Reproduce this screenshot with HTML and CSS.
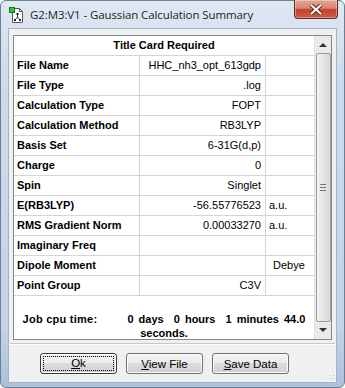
FILE: index.html
```html
<!DOCTYPE html>
<html lang="en">

<head>
    <meta charset="UTF-8">
    <title>G2:M3:V1 - Gaussian Calculation Summary</title>
    <link rel="stylesheet" href="styles.css">
</head>

<body>
    <div class="window">
        <!-- Title bar -->
        <div class="titlebar">
            <svg class="app-icon" width="16" height="16" viewBox="0 0 16 16">
                <path d="M3.5 1.5 H10.5 L13.5 4.5 V15.5 H3.5 Z" fill="#fff" stroke="#555" />
                <path d="M10.5 1.5 V4.5 H13.5" fill="none" stroke="#555" />
                <line x1="8.5" y1="7" x2="8.5" y2="10" stroke="#333" />
                <line x1="8.5" y1="10" x2="6" y2="13" stroke="#333" />
                <line x1="8.5" y1="10" x2="11" y2="13" stroke="#333" />
                <rect x="7.5" y="6" width="2" height="2" fill="#222" />
                <rect x="5" y="12" width="2" height="2" fill="#222" />
                <rect x="10" y="12" width="2" height="2" fill="#222" />
                <rect x="0.5" y="0.5" width="5" height="5" fill="#2fc22f" stroke="#137a13" />
            </svg>
            <span class="title-text">G2:M3:V1 - Gaussian Calculation Summary</span>
            <div class="close-btn">
                <svg width="14" height="11" viewBox="0 0 14 11">
                    <path d="M2 1 L12 10 M12 1 L2 10" stroke="#5a2018" stroke-width="4" />
                    <path d="M2 1 L12 10 M12 1 L2 10" stroke="#fff" stroke-width="2.2" />
                </svg>
            </div>
        </div>

        <!-- Client area -->
        <div class="client">
            <div class="listbox">
                <div class="sheet">
                    <div class="head">Title Card Required</div>

                    <div class="row"><div class="lbl">File Name</div><div class="val">HHC_nh3_opt_613gdp</div><div class="unit"></div></div>
                    <div class="row"><div class="lbl">File Type</div><div class="val">.log</div><div class="unit"></div></div>
                    <div class="row"><div class="lbl">Calculation Type</div><div class="val">FOPT</div><div class="unit"></div></div>
                    <div class="row"><div class="lbl">Calculation Method</div><div class="val">RB3LYP</div><div class="unit"></div></div>
                    <div class="row"><div class="lbl">Basis Set</div><div class="val">6-31G(d,p)</div><div class="unit"></div></div>
                    <div class="row"><div class="lbl">Charge</div><div class="val">0</div><div class="unit"></div></div>
                    <div class="row"><div class="lbl">Spin</div><div class="val">Singlet</div><div class="unit"></div></div>
                    <div class="row"><div class="lbl">E(RB3LYP)</div><div class="val">-56.55776523</div><div class="unit">a.u.</div></div>
                    <div class="row"><div class="lbl">RMS Gradient Norm</div><div class="val">0.00033270</div><div class="unit">a.u.</div></div>
                    <div class="row"><div class="lbl">Imaginary Freq</div><div class="val"></div><div class="unit"></div></div>
                    <div class="row"><div class="lbl">Dipole Moment</div><div class="val"></div><div class="unit debye">Debye</div></div>
                    <div class="row"><div class="lbl">Point Group</div><div class="val">C3V</div><div class="unit"></div></div>

                    <div class="job">
                        <span class="job-label">Job cpu time:</span><span class="job-time">0 days&nbsp;&nbsp;0 hours&nbsp;&nbsp;1 minutes 44.0</span><br>seconds.
                    </div>
                </div>

                <!-- Vertical scrollbar -->
                <div class="scrollbar">
                    <div class="arrow up"></div>
                    <div class="thumb"><span class="grip"></span></div>
                    <div class="arrow down"></div>
                </div>
            </div>

            <div class="separator"></div>

            <div class="buttons">
                <button class="btn default"><span class="focus"><u>O</u>k</span></button>
                <button class="btn"><u>V</u>iew File</button>
                <button class="btn"><u>S</u>ave Data</button>
                <div class="grip-corner"></div>
            </div>
        </div>
    </div>
</body>
</html>
```

FILE: styles.css
```css
* {
    box-sizing: border-box;
}

body {
    margin: 0;
    padding: 0;
    background: #fff;
    font-family: 'Liberation Sans', Arial, sans-serif;
}

.window {
    width: 345px;
    height: 388px;
    padding: 0 7px 4px 7px;
    border: 1px solid #6f7f93;
    border-radius: 6px;
    background: linear-gradient(180deg, #dfe8f3 0%, #cedbea 20%, #c4d3e5 85%, #a9c0dc 100%);
    display: flex;
    flex-direction: column;
}

.titlebar {
    height: 27px;
    flex-shrink: 0;
    display: flex;
    align-items: flex-start;
}

.app-icon {
    margin: 6px 0 0 1px;
    flex-shrink: 0;
}

.title-text {
    margin: 6px 0 0 5px;
    font-family: 'Open Sans', sans-serif;
    font-size: 11.5px;
    letter-spacing: -0.1px;
    color: #1e1e1e;
}

.close-btn {
    margin-left: auto;
    margin-right: -1px;
    margin-top: -1px;
    width: 44px;
    height: 19px;
    border: 1px solid #5e2a22;
    border-top: none;
    border-radius: 0 0 4px 4px;
    background: linear-gradient(180deg, #e3a796 0%, #d7846e 45%, #c2402a 55%, #cd5f4a 100%);
    box-shadow: inset 0 0 0 1px rgba(255, 255, 255, 0.35);
    display: flex;
    justify-content: center;
    align-items: center;
}

.client {
    flex: 1;
    min-height: 0;
    background: #f0f0f0;
    border: 1px solid #a5b4c6;
    padding: 6px 3px 0 4px;
    display: flex;
    flex-direction: column;
}

.listbox {
    width: 319px;
    height: 305px;
    flex-shrink: 0;
    border: 1px solid #828790;
    background: #fff;
    display: flex;
}

.sheet {
    width: 300px;
    font-size: 11px;
    color: #000;
}

.head {
    height: 20px;
    line-height: 19px;
    text-align: center;
    font-weight: bold;
    border-bottom: 1px solid #d5d5d5;
}

.row {
    display: grid;
    grid-template-columns: 126px 126px 48px;
    height: 20px;
}

.row > div {
    border-right: 1px solid #d5d5d5;
    border-bottom: 1px solid #d5d5d5;
    line-height: 19px;
    white-space: nowrap;
    overflow: hidden;
}

.row > div.unit {
    border-right: none;
}

.lbl {
    padding-left: 3px;
    font-weight: bold;
}

.val {
    text-align: right;
    padding-right: 4px;
}

.unit {
    padding-left: 3px;
}

.unit.debye {
    padding-left: 7px;
}

.job {
    padding-top: 16px;
    text-align: center;
    font-weight: bold;
    line-height: 14px;
    white-space: nowrap;
}

.job-label {
    margin-right: 30px;
    letter-spacing: 0.25px;
}

.job-time {
    word-spacing: 2px;
}

.scrollbar {
    width: 17px;
    background: #eaeaea;
    border-left: 1px solid #e0e0e0;
    display: flex;
    flex-direction: column;
    align-items: center;
}

.arrow {
    width: 0;
    height: 0;
    border-left: 4px solid transparent;
    border-right: 4px solid transparent;
}

.arrow.up {
    margin: 7px 0 0 0;
    border-bottom: 4px solid #333;
}

.arrow.down {
    margin: 0 0 7px 0;
    border-top: 4px solid #333;
}

.thumb {
    width: 15px;
    flex: 1;
    margin: 6px 0 6px 0;
    border: 1px solid #9d9d9d;
    border-radius: 2px;
    background: linear-gradient(90deg, #f2f2f2, #e4e4e4 50%, #d9d9d9);
    display: flex;
    justify-content: center;
    align-items: center;
}

.grip {
    width: 6px;
    height: 7px;
    border-top: 1px solid #777;
    border-bottom: 1px solid #777;
    background: linear-gradient(180deg, transparent 2px, #777 2px, #777 3px, transparent 3px);
}

.separator {
    margin: 3px -2px 0 -3px;
    height: 2px;
    flex-shrink: 0;
    border-top: 1px solid #c8c8c8;
    border-bottom: 1px solid #fff;
}

.buttons {
    flex: 1;
    display: flex;
    align-items: flex-start;
    gap: 9px;
    padding: 8px 0 0 27px;
}

.btn {
    width: 77px;
    height: 21px;
    padding: 0;
    font-family: 'Liberation Sans', Arial, sans-serif;
    font-size: 11.5px;
    color: #000;
    border: 1px solid #707070;
    border-radius: 3px;
    background: linear-gradient(180deg, #f2f2f2 0%, #ebebeb 50%, #dddddd 50%, #cfcfcf 100%);
    box-shadow: inset 0 0 0 1px #fcfcfc;
}

.btn.default {
    border-color: #3a3a3a;
}

.focus {
    display: block;
    margin: 2px;
    height: 15px;
    line-height: 13px;
    border: 1px dotted #000;
}

.grip-corner {
    align-self: flex-end;
    margin: 0 -2px 2px auto;
    width: 9px;
    height: 9px;
    background:
        radial-gradient(circle, #b8b8b8 0.9px, transparent 1px) 0 0 / 3px 3px;
    clip-path: polygon(100% 0, 100% 100%, 0 100%);
}
```
